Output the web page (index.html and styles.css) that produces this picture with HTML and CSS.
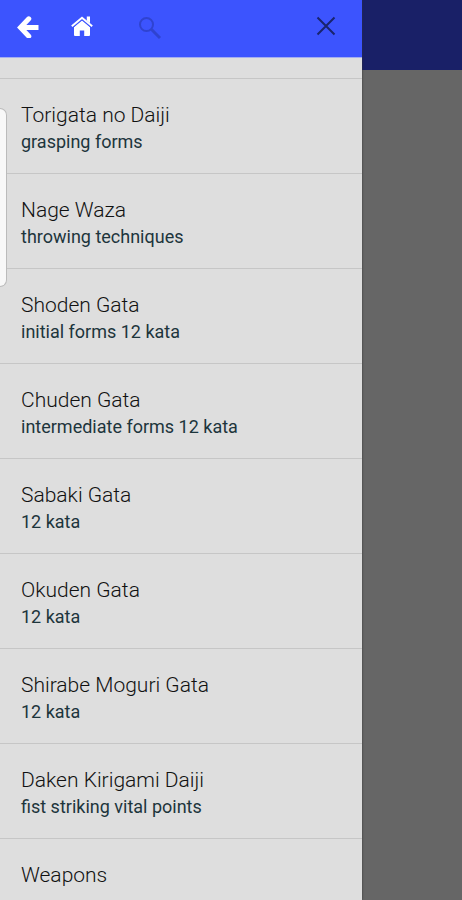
FILE: index.html
```html
<!DOCTYPE html>
<html lang="en">
<head>
<meta charset="utf-8">
<meta name="viewport" content="width=device-width, initial-scale=1">
<title>Techniques</title>
<link rel="stylesheet" href="styles.css">
</head>
<body>
<div class="app">
  <nav class="drawer" aria-label="Techniques">
    <header class="toolbar">
      <button class="tool" type="button" aria-label="Back">
        <svg class="icon" viewBox="0 0 24 24"><path class="arrow-head" d="M12.800 4.800L4.500 13.500L12.800 22.200"/><path class="arrow-shaft" d="M5.500 13.500H22.500"/></svg>
      </button>
      <button class="tool" type="button" aria-label="Home">
        <svg class="icon" viewBox="0 0 24 24"><path class="solid" d="M12 6L4 13V21Q4 22 5 22H9.800V16.500H14.200V22H19Q20 22 20 21V13Z"/><path class="solid" d="M16.800 2.500H20V9.500L16.800 7Z"/><path class="roof-gap" d="M2 12.800L12 4.500L22 12.800"/><path class="roof" d="M1.800 12.200L12 3.800L22.200 12.200"/></svg>
      </button>
      <button class="tool search" type="button" aria-label="Search">
        <svg class="icon" viewBox="0 0 24 24"><circle class="lens" cx="8.500" cy="8.500" r="6.500"/><path class="handle" d="M13.300 13.300L22 22"/></svg>
      </button>
      <button class="tool close" type="button" aria-label="Close">
        <svg class="icon" viewBox="0 0 24 24"><path class="cross" d="M3.500 3.500L20.500 20.500M20.500 3.500L3.500 20.500"/></svg>
      </button>
    </header>
    <ul class="list">
      <li class="item"><a class="link" href="#torigata"><span class="name">Torigata no Daiji</span><span class="note">grasping forms</span></a></li>
      <li class="item"><a class="link" href="#nage"><span class="name">Nage Waza</span><span class="note">throwing techniques</span></a></li>
      <li class="item"><a class="link" href="#shoden"><span class="name">Shoden Gata</span><span class="note">initial forms 12 kata</span></a></li>
      <li class="item"><a class="link" href="#chuden"><span class="name">Chuden Gata</span><span class="note">intermediate forms 12 kata</span></a></li>
      <li class="item"><a class="link" href="#sabaki"><span class="name">Sabaki Gata</span><span class="note">12 kata</span></a></li>
      <li class="item"><a class="link" href="#okuden"><span class="name">Okuden Gata</span><span class="note">12 kata</span></a></li>
      <li class="item"><a class="link" href="#shirabe"><span class="name">Shirabe Moguri Gata</span><span class="note">12 kata</span></a></li>
      <li class="item"><a class="link" href="#daken"><span class="name">Daken Kirigami Daiji</span><span class="note">fist striking vital points</span></a></li>
      <li class="item"><a class="link" href="#weapons"><span class="name">Weapons</span></a></li>
    </ul>
    <div class="edge-handle"></div>
  </nav>
  <div class="page">
    <div class="page-bar"></div>
  </div>
</div>
</body>
</html>
```
FILE: styles.css
```css
* {
  box-sizing: border-box;
}

body {
  margin: 0;
  font-family: Roboto, "Liberation Sans", sans-serif;
  background: #666;
}

.app {
  display: flex;
  height: 100vh;
  overflow: hidden;
}

.drawer {
  position: relative;
  display: flex;
  flex-direction: column;
  flex: 1;
  min-width: 0;
  background: #dedede;
  box-shadow: 0 0 2px #333;
}

.toolbar {
  display: flex;
  flex: none;
  align-items: center;
  height: 58px;
  padding: 0 24px 5px 16px;
  background: #3c54fe;
  border-bottom: 1px solid #a4aef0;
}

.tool {
  display: flex;
  margin: 0 30px 0 0;
  padding: 0;
  border: 0;
  background: none;
  cursor: pointer;
}

.search {
  margin-left: 14px;
}

.close {
  margin: 0 0 0 auto;
}

.icon {
  width: 24px;
  height: 24px;
  fill: none;
}

.search .icon {
  margin-top: 4px;
}

.arrow-head,
.arrow-shaft {
  stroke: #fff;
  stroke-width: 5;
}

.arrow-head {
  stroke-linecap: round;
}

.solid {
  fill: #fff;
}

.roof {
  stroke: #fff;
  stroke-width: 2;
}

.roof-gap {
  stroke: #3c54fe;
  stroke-width: 3;
}

.lens,
.handle {
  stroke: #2f43d0;
  stroke-width: 2;
}

.handle {
  stroke-width: 3;
}

.cross {
  stroke: #19246d;
  stroke-width: 2;
}

.list {
  flex: 1;
  min-height: 0;
  margin: 0;
  padding: 20px 0 0;
  overflow: hidden;
  list-style: none;
}

.item {
  border-top: 1px solid #c6c6c6;
}

.link {
  display: flex;
  flex-direction: column;
  padding: 23px 21px 17px;
  text-decoration: none;
}

.name {
  font-size: 21px;
  font-weight: 300;
  line-height: 26px;
  color: #111;
}

.note {
  font-size: 18px;
  line-height: 28px;
  color: #1d353c;
}

.edge-handle {
  position: absolute;
  top: 108px;
  left: 0;
  width: 7px;
  height: 179px;
  background: #f8f8f8;
  border: 1px solid #bbb;
  border-left: 0;
  border-radius: 0 7px 7px 0;
}

.page {
  flex: none;
  width: 100px;
  background: #666;
}

.page-bar {
  height: 70px;
  background: #192067;
}
```
